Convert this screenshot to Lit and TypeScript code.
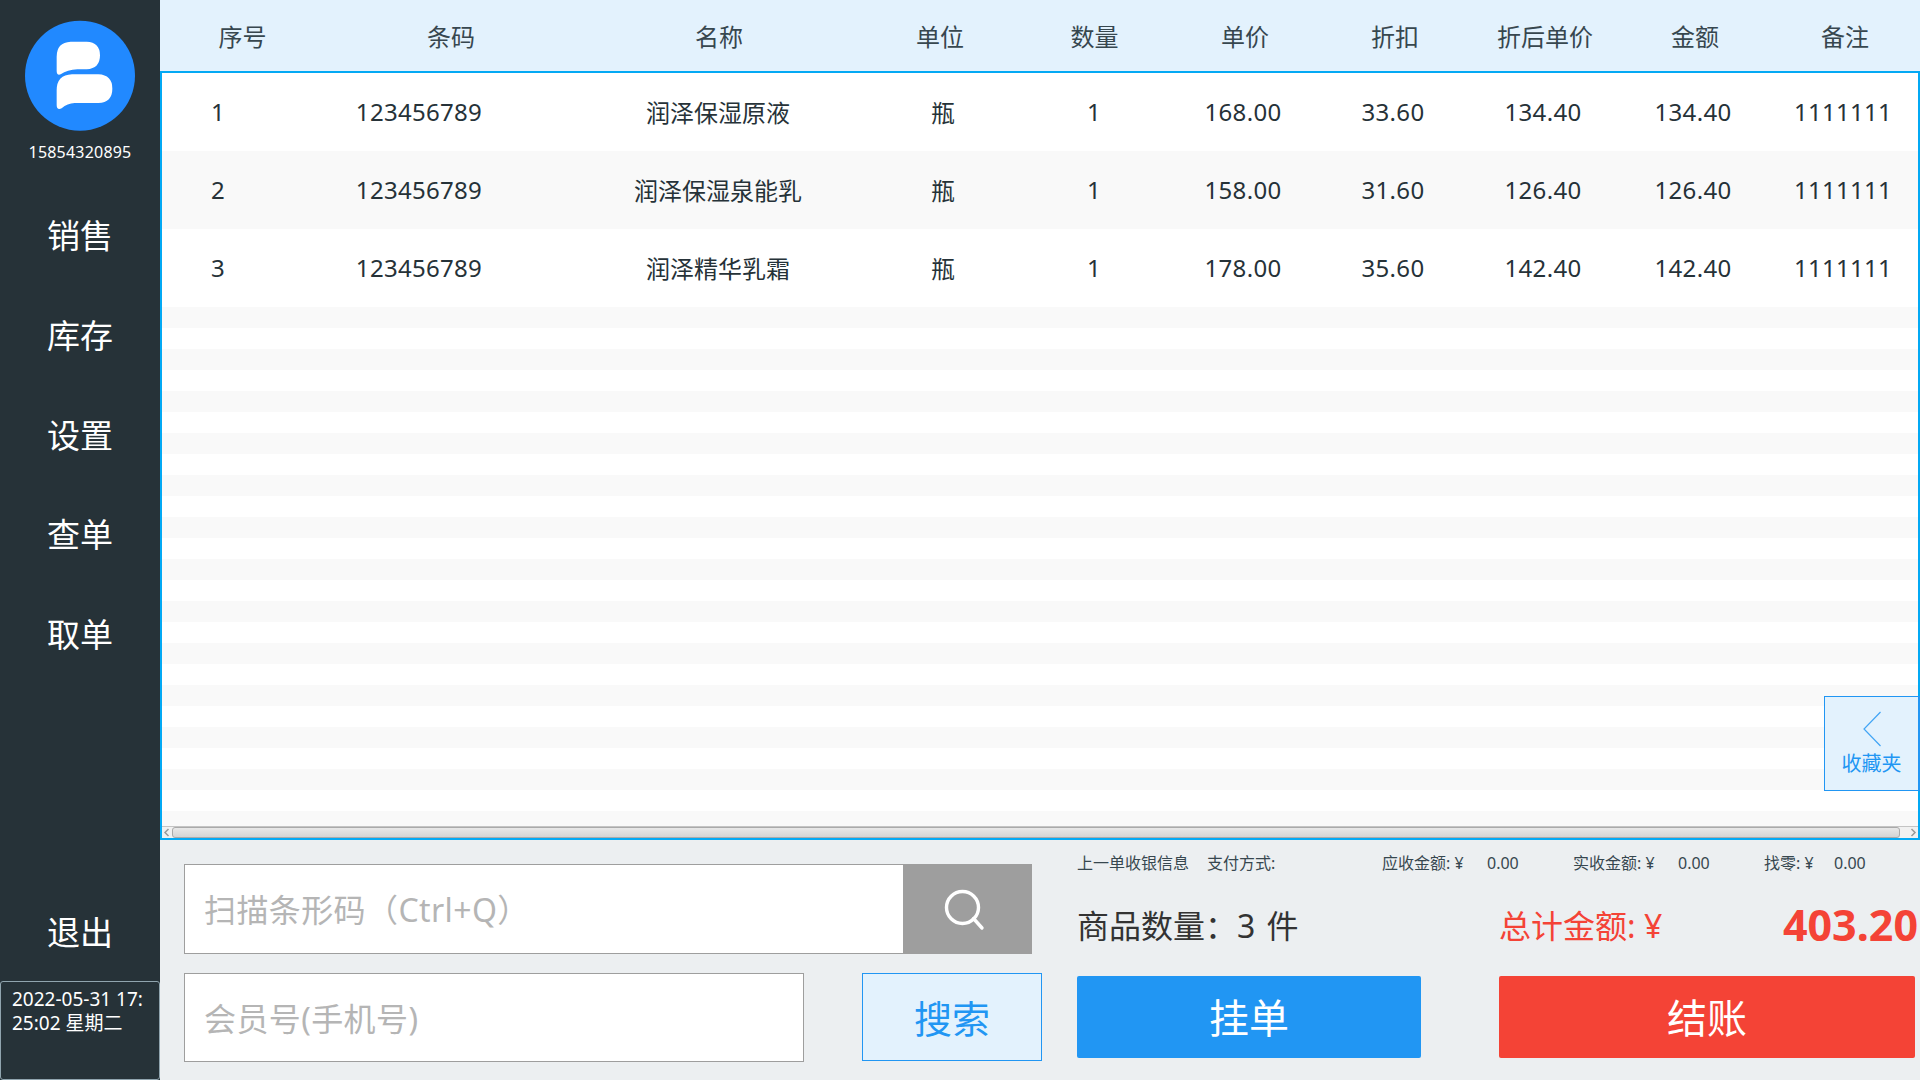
import { LitElement, html, css } from "lit";
import { customElement } from "lit/decorators.js";

const HEAD = ["序号", "条码", "名称", "单位", "数量", "单价", "折扣", "折后单价", "金额", "备注"];
const ROWS = [
  ["1", "123456789", "润泽保湿原液", "瓶", "1", "168.00", "33.60", "134.40", "134.40", "1111111"],
  ["2", "123456789", "润泽保湿泉能乳", "瓶", "1", "158.00", "31.60", "126.40", "126.40", "1111111"],
  ["3", "123456789", "润泽精华乳霜", "瓶", "1", "178.00", "35.60", "142.40", "142.40", "1111111"],
];
const NAV = ["销售", "库存", "设置", "查单", "取单"];

@customElement("app-root")
export class AppRoot extends LitElement {
  static styles = css`
    :host {
      display: flex;
      width: 1920px;
      height: 1080px;
      overflow: hidden;
      font-family: "Noto Sans", "Noto Sans CJK SC", sans-serif;
      color: #263238;
      background: #eceff1;
    }
    .side {
      width: 160px;
      flex: none;
      background: #263238;
      color: #fff;
      display: flex;
      flex-direction: column;
      align-items: center;
    }
    .logo {
      display: block;
      width: 120px;
      height: 120px;
      margin-top: 15px;
    }
    .phone {
      font-size: 16px;
      line-height: 24px;
      margin-top: 5px;
      letter-spacing: 0.2px;
    }
    .nav {
      margin-top: 22px;
      display: flex;
      flex-direction: column;
      align-items: center;
    }
    .nav-item {
      font-size: 33px;
      line-height: 100px;
      height: 99.8px;
    }
    .exit {
      margin-top: auto;
      font-size: 33px;
      line-height: 48px;
      margin-bottom: 24px;
    }
    .clock {
      box-sizing: border-box;
      width: 160px;
      height: 99px;
      border: 1px solid #90a4ae;
      border-radius: 3px;
      padding: 5px 4px 0 11px;
      font-size: 19px;
      line-height: 24px;
      white-space: nowrap;
    }
    .main {
      flex: 1;
      min-width: 0;
      display: flex;
      flex-direction: column;
    }
    .table {
      height: 840px;
      flex: none;
      display: flex;
      flex-direction: column;
      background: #fff;
    }
    .head {
      box-sizing: border-box;
      height: 73px;
      flex: none;
      display: grid;
      grid-template-columns: 160px 262px 274px 168px 146px repeat(5, 150px);
      align-items: center;
      background: #e3f2fd;
      border-bottom: 2px solid #03a9f4;
      font-size: 24px;
      color: #37474f;
      text-align: center;
      padding-bottom: 1px;
    }
    .head > :first-child {
      padding-left: 5px;
    }
    .head > :nth-child(5) {
      padding-right: 5px;
    }
    .frame {
      flex: 1;
      min-height: 0;
      display: flex;
      flex-direction: column;
      border: solid #03a9f4;
      border-width: 0 2px 2px 2px;
    }
    .rows {
      flex: 1;
      min-height: 0;
      overflow: hidden;
    }
    .row {
      box-sizing: border-box;
      display: grid;
      grid-template-columns: 112px 290px 308px 142px 154px repeat(5, 150px);
      align-items: center;
      height: 78px;
      padding-bottom: 2px;
      font-size: 24px;
      text-align: center;
      letter-spacing: 0.3px;
    }
    .row > :nth-child(3), .row > :nth-child(4) {
      letter-spacing: 0;
    }
    .row > :nth-child(5) {
      padding-left: 6px;
    }
    .row.empty {
      height: 21px;
      padding: 0;
    }
    .row.even {
      background: #f9f9f9;
    }
    .hbar {
      box-sizing: border-box;
      flex: none;
      height: 12px;
      display: flex;
      align-items: center;
      background: #f1f1f1;
      border-top: 1px solid #c4c4c4;
    }
    .arrow {
      width: 10px;
      height: 11px;
      flex: none;
      display: block;
    }
    .thumb {
      box-sizing: border-box;
      flex: 1;
      height: 11px;
      border: 1px solid #aaa;
      border-radius: 3px;
      background: linear-gradient(#e8e8e8, #d4d4d4);
      margin-right: 8px;
    }
    .fav {
      position: absolute;
      right: 0;
      top: 696px;
      box-sizing: border-box;
      width: 96px;
      height: 95px;
      background: #e3f2fd;
      border: 1px solid #2196f3;
      border-right-width: 2px;
      color: #2196f3;
      font-size: 20px;
      line-height: 28px;
      text-align: center;
    }
    .fav svg {
      display: block;
      margin: 14px 0 3px 37px;
      width: 20px;
      height: 36px;
    }
    .panel {
      flex: 1;
      min-height: 0;
      display: flex;
      background: #eceff1;
    }
    .left {
      box-sizing: border-box;
      width: 882px;
      flex: none;
      padding: 24px 0 0 24px;
      display: flex;
      flex-direction: column;
      gap: 19px;
    }
    .scan {
      display: flex;
      height: 90px;
    }
    .member-row {
      display: flex;
      height: 89px;
      justify-content: space-between;
      width: 858px;
    }
    input {
      box-sizing: border-box;
      height: 100%;
      border: 1px solid #9e9e9e;
      border-radius: 0;
      background: #fff;
      padding: 1px 19px 0;
      margin: 0;
      outline: none;
      font: inherit;
      font-size: 32px;
      letter-spacing: 0.4px;
      color: #263238;
    }
    input::placeholder {
      color: #b5b5b5;
      opacity: 1;
    }
    .scan input {
      width: 719px;
      border-right: none;
    }
    .member-row input {
      width: 620px;
      padding-top: 2px;
    }
    .scan-btn {
      width: 129px;
      flex: none;
      background: #9e9e9e;
      display: flex;
      align-items: center;
      justify-content: center;
      border: none;
      padding: 0 8px 0 0;
    }
    .find {
      box-sizing: border-box;
      width: 180px;
      height: 88px;
      background: #e3f2fd;
      border: 1px solid #2196f3;
      color: #2196f3;
      font: inherit;
      font-size: 38px;
      padding: 0 0 2px;
    }
    .right {
      box-sizing: border-box;
      flex: 1;
      min-width: 0;
      padding: 10px 5px 0 35px;
      display: flex;
      flex-direction: column;
    }
    .info {
      height: 26px;
      display: grid;
      grid-template-columns: 130px 175px 105px 86px 105px 86px 70px 1fr;
      font-size: 16px;
      line-height: 26px;
      color: #37474f;
      white-space: nowrap;
    }
    .sum {
      margin-top: 18px;
      height: 60px;
      margin-bottom: 2px;
      display: flex;
      align-items: center;
      white-space: nowrap;
    }
    .count {
      width: 422px;
      flex: none;
      font-size: 32px;
      word-spacing: 3px;
      color: #333;
    }
    .total {
      flex: 1;
      display: flex;
      align-items: center;
      justify-content: space-between;
      color: #f44336;
      font-size: 32px;
      margin-right: -3px;
    }
    .total b {
      font-size: 43px;
      font-weight: 700;
    }
    .acts {
      margin-top: 20px;
      display: flex;
      justify-content: space-between;
    }
    .btn {
      height: 82px;
      border: none;
      border-radius: 2px;
      color: #fff;
      font: inherit;
      font-size: 40px;
      padding: 0 0 2px;
    }
    .hold {
      width: 344px;
      background: #2196f3;
    }
    .pay {
      width: 416px;
      background: #f44336;
    }
  `;

  render() {
    const empties = Array.from({ length: 25 }, (_, i) => i);
    return html`
      <aside class="side">
        <svg class="logo" viewBox="0 0 360 360" aria-hidden="true">
          <circle cx="180" cy="182" r="165" fill="#2189ff"></circle>
          <path fill="#fff" d="M110 125Q110 82 152 80L200 80Q240 82 240 121Q240 161 200 163L172 163Q142 164 122 178Q110 182 110 168Z"></path>
          <path fill="#fff" d="M110 226Q110 180 156 178L235 178Q277 180 277 221Q277 262 235 264L164 264Q142 265 125 280Q110 286 110 270Z"></path>
        </svg>
        <div class="phone">15854320895</div>
        <nav class="nav">
          ${NAV.map((n) => html`<div class="nav-item">${n}</div>`)}
        </nav>
        <div class="exit">退出</div>
        <div class="clock">2022-05-31 17:<br />25:02 星期二</div>
      </aside>
      <main class="main">
        <section class="table">
          <div class="head">${HEAD.map((h) => html`<div>${h}</div>`)}</div>
          <div class="frame">
            <div class="rows">
              ${ROWS.map(
                (r, i) => html`<div class="row ${i % 2 ? "even" : ""}">${r.map((c) => html`<div>${c}</div>`)}</div>`
              )}
              ${empties.map((i) => html`<div class="row empty ${i % 2 ? "" : "even"}"></div>`)}
            </div>
            <div class="hbar">
              <svg class="arrow" viewBox="0 0 10 11" aria-hidden="true"><path d="M6.5 2L3 5.5L6.5 9" fill="none" stroke="#999" stroke-width="1.5"></path></svg>
              <div class="thumb"></div>
              <svg class="arrow" viewBox="0 0 10 11" aria-hidden="true"><path d="M3.5 2L7 5.5L3.5 9" fill="none" stroke="#999" stroke-width="1.5"></path></svg>
            </div>
          </div>
        </section>
        <section class="panel">
          <div class="left">
            <div class="scan">
              <input placeholder="扫描条形码（Ctrl+Q）" />
              <button class="scan-btn" aria-label="搜索">
                <svg width="44" height="44" viewBox="0 0 44 44" aria-hidden="true">
                  <circle cx="20.5" cy="20.5" r="16" fill="none" stroke="#fff" stroke-width="3.4"></circle>
                  <path d="M31.5 31.5L40 41" fill="none" stroke="#fff" stroke-width="3.4" stroke-linecap="round"></path>
                </svg>
              </button>
            </div>
            <div class="member-row">
              <input placeholder="会员号(手机号)" />
              <button class="find">搜索</button>
            </div>
          </div>
          <div class="right">
            <div class="info">
              <span>上一单收银信息</span>
              <span>支付方式:</span>
              <span>应收金额: ¥</span>
              <span>0.00</span>
              <span>实收金额: ¥</span>
              <span>0.00</span>
              <span>找零: ¥</span>
              <span>0.00</span>
            </div>
            <div class="sum">
              <div class="count">商品数量：3 件</div>
              <div class="total"><span>总计金额: ¥</span><b>403.20</b></div>
            </div>
            <div class="acts">
              <button class="btn hold">挂单</button>
              <button class="btn pay">结账</button>
            </div>
          </div>
        </section>
      </main>
      <div class="fav">
        <svg viewBox="0 0 20 36" aria-hidden="true"><path d="M18.5 1L2 18L18.5 35" fill="none" stroke="#42a5f5" stroke-width="1.2"></path></svg>
        收藏夹
      </div>
    `;
  }
}
